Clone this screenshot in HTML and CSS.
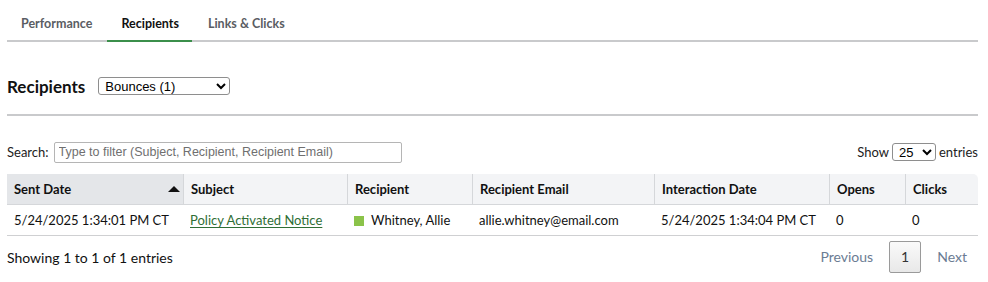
FILE: index.html
```html
<!DOCTYPE html>
<html>
<head>
<meta charset="utf-8">
<link rel="stylesheet" href="styles.css">
</head>
<body>
<div class="page">
  <nav class="tabs">
    <div class="tab">Performance</div>
    <div class="tab active">Recipients</div>
    <div class="tab">Links &amp; Clicks</div>
  </nav>

  <div class="heading-row">
    <h2 class="title">Recipients</h2>
    <select class="filter-select">
      <option>Bounces (1)</option>
    </select>
  </div>
  <div class="rule"></div>

  <div class="controls">
    <label class="search">Search:
      <input type="text" class="search-input" placeholder="Type to filter (Subject, Recipient, Recipient Email)">
    </label>
    <label class="length">Show
      <select class="length-select"><option>25</option></select>
      entries
    </label>
  </div>

  <table class="grid">
    <thead>
      <tr>
        <th class="sorted c1">Sent Date<span class="sort-arrow"></span></th>
        <th class="c2">Subject</th>
        <th class="c3">Recipient</th>
        <th class="c4">Recipient Email</th>
        <th class="c5">Interaction Date</th>
        <th class="c6">Opens</th>
        <th class="c7">Clicks</th>
      </tr>
    </thead>
    <tbody>
      <tr>
        <td>5/24/2025 1:34:01 PM CT</td>
        <td><a class="link" href="#">Policy Activated Notice</a></td>
        <td><span class="dot"></span>Whitney, Allie</td>
        <td>allie.whitney@email.com</td>
        <td>5/24/2025 1:34:04 PM CT</td>
        <td>0</td>
        <td>0</td>
      </tr>
    </tbody>
  </table>

  <div class="footer">
    <div class="info">Showing 1 to 1 of 1 entries</div>
    <div class="pager">
      <span class="pg-btn disabled">Previous</span>
      <span class="pg-btn current">1</span>
      <span class="pg-btn disabled">Next</span>
    </div>
  </div>
</div>
</body>
</html>
```

FILE: styles.css
```css
* { box-sizing: border-box; }
html, body { margin: 0; padding: 0; background: #fff; }
body {
  font-family: "Lato", "Noto Sans", sans-serif;
  font-size: 14px;
  color: #1a1a1a;
}
.page { padding: 0 10px 0 7px; }

.tabs {
  display: flex;
  border-bottom: 2px solid #c9cacc;
}
.tab {
  padding: 15px 13px 7px 14px;
  line-height: 18px;
  font-size: 12.5px;
  font-weight: 700;
  color: #5a5d63;
  margin-bottom: -2px;
  border-bottom: 2px solid transparent;
}
.tab + .tab { margin-left: 2px; }
.tab.active {
  color: #111;
  border-bottom-color: #3b8f4b;
}

.heading-row {
  display: flex;
  align-items: center;
  padding-top: 35px;
  height: 64px;
  padding-bottom: 11px;
}
.title {
  margin: 0 13px 0 0;
  font-size: 17px;
  font-weight: 700;
  color: #111;
}
.filter-select {
  width: 132px;
  height: 18px;
  font-family: "Liberation Sans", Arial, sans-serif;
  font-size: 13px;
  border: 1px solid #8e8e8e;
  border-radius: 3px;
  padding: 0 2px;
  background: #fff;
}
.rule { height: 2px; background: #c9cacc; margin-top: 8px; }

.controls {
  display: flex;
  justify-content: space-between;
  align-items: center;
  margin-top: 25px;
  height: 22px;
  font-size: 13px;
}
.search, .length { display: flex; align-items: center; color: #222; }
.search-input {
  margin-left: 5px;
  width: 348px;
  height: 21px;
  border: 1px solid #b5b5b5;
  border-radius: 2px;
  padding: 0 4px;
  font-family: "Liberation Sans", Arial, sans-serif;
  font-size: 12.5px;
}
.search-input::placeholder { color: #6f6f6f; }
.length-select {
  margin: 0 3px;
  width: 44px;
  height: 18px;
  font-family: "Liberation Sans", Arial, sans-serif;
  font-size: 13px;
  border: 1px solid #8e8e8e;
  border-radius: 3px;
  padding: 0 2px;
  background: #fff;
}

.grid {
  width: 100%;
  border-collapse: separate;
  border-spacing: 0;
  margin-top: 11px;
  font-size: 13px;
}
.grid th {
  text-align: left;
  background: #f3f4f6;
  height: 31px;
  padding: 0 7px;
  font-weight: 700;
  color: #111;
  border-left: 1px solid #d5d7da;
  border-bottom: 1px solid #d5d7da;
  position: relative;
}
.grid th:first-child { border-left: none; }
.grid th:last-child { border-top-right-radius: 5px; }
.grid th.sorted { background: #e4e6e9; }
.sort-arrow {
  position: absolute;
  right: 3px;
  top: 12px;
  width: 0; height: 0;
  border-left: 6px solid transparent;
  border-right: 6px solid transparent;
  border-bottom: 6px solid #111;
}
.c1 { width: 176px; }
.c2 { width: 164px; }
.c3 { width: 125px; }
.c4 { width: 182px; }
.c5 { width: 175px; }
.c6 { width: 76px; }
.grid td {
  height: 31px;
  padding: 0 7px;
  border-bottom: 1px solid #cfd0d2;
  color: #111;
  white-space: nowrap;
}
.link { color: #2f6e35; text-decoration: underline; text-underline-offset: 2px; }
.dot {
  display: inline-block;
  width: 10px; height: 10px;
  background: #8bc34a;
  margin-right: 7px;
  vertical-align: -1px;
}

.footer {
  display: flex;
  justify-content: space-between;
  align-items: center;
  margin-top: 5px;
}
.info { font-size: 14px; color: #111; }
.pager { display: flex; align-items: center; margin-right: 2px; }
.pg-btn {
  padding: 0 8px;
  height: 32px;
  line-height: 30px;
  font-size: 14px;
  border: 1px solid transparent;
  margin-left: 7px;
}
.pg-btn:first-child { margin-left: 0; }
.pg-btn.disabled { color: #6b7c93; }
.pg-btn.current {
  border: 1px solid #9a9a9a;
  border-radius: 2px;
  background: linear-gradient(#fafafa, #e8e8e8);
  color: #333;
  padding: 0 11px;
}
```
